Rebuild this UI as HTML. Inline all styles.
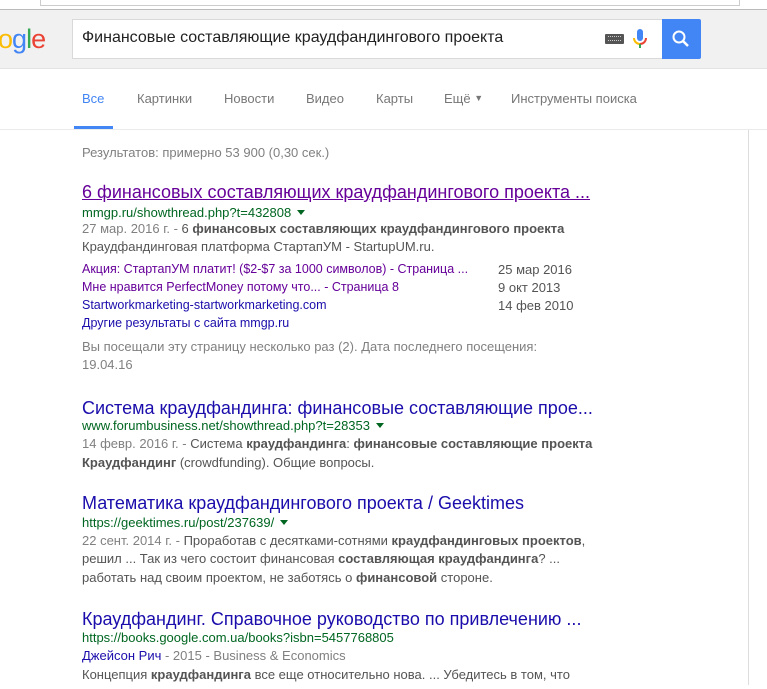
<!DOCTYPE html>
<html><head><meta charset="utf-8"><style>
*{margin:0;padding:0;box-sizing:border-box}
body{width:767px;height:689px;overflow:hidden;background:#fff;font-family:"Liberation Sans",Arial,sans-serif;position:relative}
.a{position:absolute;white-space:nowrap}
.t{font-size:18px;color:#1a0dab;left:82px}
.u{font-size:13px;color:#006621;left:82px}
.s{font-size:13px;color:#545454;left:82px}
.s b{color:#545454}
.l{font-size:12.5px;color:#1a0dab}
.tri{display:inline-block;width:0;height:0;border-left:4px solid transparent;border-right:4px solid transparent;border-top:5px solid #006621;margin-left:6px;vertical-align:2px}
</style></head><body>
<div class="a" style="left:0;top:0;width:767px;height:10px;background:#fff;border-bottom:1px solid #bbb"></div>
<div class="a" style="left:40px;top:-4px;width:700px;height:10px;border:1px solid #ccc;background:#fff"></div>
<div class="a" style="left:0;top:10px;width:767px;height:59px;background:#f1f1f1;border-bottom:1px solid #e3e3e3"></div>
<div class="a" style="left:-2px;top:24px;font-size:27px;font-family:'Liberation Sans',sans-serif;letter-spacing:-1px"><span style="color:#fbbc05">o</span><span style="color:#4285f4">g</span><span style="color:#34a853">l</span><span style="color:#ea4335">e</span></div>
<div class="a" style="left:72px;top:19px;width:590px;height:40px;background:#fff;border:1px solid #d9d9d9;border-right:none"></div>
<div class="a" style="left:82px;top:29px;font-size:16px;color:#222">Финансовые составляющие краудфандингового проекта</div>
<div class="a" style="left:605px;top:34px;width:19px;height:10px;background:#555;border-radius:1px"></div>
<div class="a" style="left:608px;top:36px;width:13px;height:5px;border-top:1px dotted #ccc;border-bottom:1px dotted #ccc"></div>
<svg class="a" style="left:632px;top:28px" width="16" height="22" viewBox="0 0 16 22"><rect x="5" y="1" width="6" height="12" rx="3" fill="#4285f4"/><path d="M2 10a6 6 0 0 0 6 6" stroke="#fbbc05" stroke-width="2" fill="none"/><path d="M8 16a6 6 0 0 0 6-6" stroke="#ea4335" stroke-width="2" fill="none"/><rect x="7" y="16" width="2" height="4" fill="#34a853"/></svg>
<div class="a" style="left:662px;top:19px;width:39px;height:40px;background:#4285f4;border-radius:0 2px 2px 0"></div>
<svg class="a" style="left:670px;top:28px" width="22" height="22" viewBox="0 0 22 22"><circle cx="9" cy="9" r="5.5" stroke="#fff" stroke-width="2" fill="none"/><path d="M13 13l5 5" stroke="#fff" stroke-width="2.5"/></svg>
<div class="a" style="top:91px;left:82px;font-size:13px;color:#1a73e8;color:#4285f4">Все</div>
<div class="a" style="top:91px;left:137px;font-size:13px;color:#777">Картинки</div>
<div class="a" style="top:91px;left:224px;font-size:13px;color:#777">Новости</div>
<div class="a" style="top:91px;left:306px;font-size:13px;color:#777">Видео</div>
<div class="a" style="top:91px;left:376px;font-size:13px;color:#777">Карты</div>
<div class="a" style="top:91px;left:444px;font-size:13px;color:#777">Ещё <span style="font-size:9px;vertical-align:2px">▼</span></div>
<div class="a" style="top:91px;left:511px;font-size:13px;color:#777">Инструменты поиска</div>
<div class="a" style="left:74px;top:126px;width:39px;height:3px;background:#4285f4"></div>
<div class="a" style="left:0;top:129px;width:767px;height:1px;background:#ebebeb"></div>
<div class="a" style="left:748px;top:130px;width:1px;height:555px;background:#ddd"></div>
<div class="a s" style="top:145px;color:#808080">Результатов: примерно 53 900 (0,30 сек.)</div>

<div class="a t" style="top:182px;color:#660099;text-decoration:underline">6 финансовых составляющих краудфандингового проекта ...</div>
<div class="a u" style="top:205px">mmgp.ru/showthread.php?t=432808<span class="tri"></span></div>
<div class="a s" style="top:221px"><span style="color:#808080">27 мар. 2016 г. - </span>6 <b>финансовых составляющих краудфандингового проекта</b></div>
<div class="a s" style="top:239px">Краудфандинговая платформа СтартапУМ - StartupUM.ru.</div>
<div class="a l" style="top:262px;left:82px;color:#660099">Акция: СтартапУМ платит! ($2-$7 за 1000 символов) - Страница ...</div>
<div class="a s" style="top:262px;left:498px;color:#545454">25 мар 2016</div>
<div class="a l" style="top:280px;left:82px;color:#660099">Мне нравится PerfectMoney потому что... - Страница 8</div>
<div class="a s" style="top:280px;left:498px">9 окт 2013</div>
<div class="a l" style="top:298px;left:82px">Startworkmarketing-startworkmarketing.com</div>
<div class="a s" style="top:298px;left:498px">14 фев 2010</div>
<div class="a l" style="top:316px;left:82px">Другие результаты с сайта mmgp.ru</div>
<div class="a s" style="top:339px;color:#808080">Вы посещали эту страницу несколько раз (2). Дата последнего посещения:</div>
<div class="a s" style="top:357px;color:#808080">19.04.16</div>

<div class="a t" style="top:398px">Система краудфандинга: финансовые составляющие прое...</div>
<div class="a u" style="top:418px">www.forumbusiness.net/showthread.php?t=28353<span class="tri"></span></div>
<div class="a s" style="top:436px"><span style="color:#808080">14 февр. 2016 г. - </span>Система <b>краудфандинга</b>: <b>финансовые составляющие проекта</b></div>
<div class="a s" style="top:455px"><b>Краудфандинг</b> (crowdfunding). Общие вопросы.</div>

<div class="a t" style="top:493px">Математика краудфандингового проекта / Geektimes</div>
<div class="a u" style="top:515px">https://geektimes.ru/post/237639/<span class="tri"></span></div>
<div class="a s" style="top:533px"><span style="color:#808080">22 сент. 2014 г. - </span>Проработав с десятками-сотнями <b>краудфандинговых проектов</b>,</div>
<div class="a s" style="top:551px">решил ... Так из чего состоит финансовая <b>составляющая краудфандинга</b>? ...</div>
<div class="a s" style="top:570px">работать над своим проектом, не заботясь о <b>финансовой</b> стороне.</div>

<div class="a t" style="top:609px">Краудфандинг. Справочное руководство по привлечению ...</div>
<div class="a u" style="top:630px">https://books.google.com.ua/books?isbn=5457768805</div>
<div class="a s" style="top:648px"><span style="color:#1a0dab">Джейсон Рич</span><span style="color:#808080"> - 2015 - Business &amp; Economics</span></div>
<div class="a s" style="top:667px">Концепция <b>краудфандинга</b> все еще относительно нова. ... Убедитесь в том, что</div>
</body></html>
